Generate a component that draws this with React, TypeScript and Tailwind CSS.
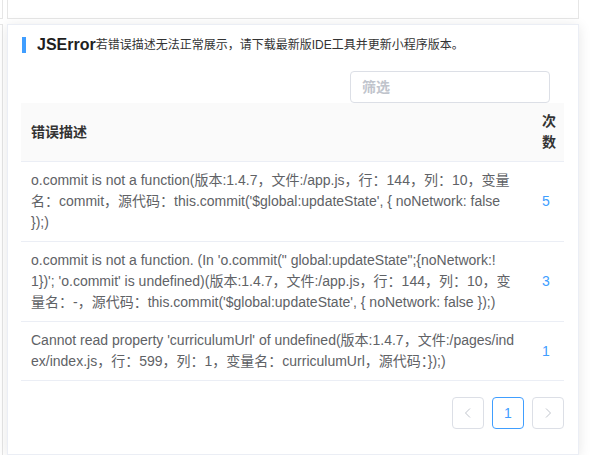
import React from 'react';

const rows = [
  {
    lines: [
      'o.commit is not a function(版本:1.4.7，文件:/app.js，行：144，列：10，变量',
      "名：commit，源代码：this.commit('$global:updateState', { noNetwork: false",
      '});)',
    ],
    count: 5,
  },
  {
    lines: [
      "o.commit is not a function. (In 'o.commit(\" global:updateState\";{noNetwork:!",
      "1})'; 'o.commit' is undefined)(版本:1.4.7，文件:/app.js，行：144，列：10，变",
      "量名：-，源代码：this.commit('$global:updateState', { noNetwork: false });)",
    ],
    count: 3,
  },
  {
    lines: [
      "Cannot read property 'curriculumUrl' of undefined(版本:1.4.7，文件:/pages/ind",
      'ex/index.js，行：599，列：1，变量名：curriculumUrl，源代码：});)',
    ],
    count: 1,
  },
];

const ChevronLeft = () => (
  <svg width="10" height="12" viewBox="0 0 10 12" fill="none">
    <path d="M7 1.5L2.5 6L7 10.5" stroke="#c0c4cc" strokeWidth="1" />
  </svg>
);

const ChevronRight = () => (
  <svg width="10" height="12" viewBox="0 0 10 12" fill="none">
    <path d="M3 1.5L7.5 6L3 10.5" stroke="#c0c4cc" strokeWidth="1" />
  </svg>
);

export default function App() {
  return (
    <div
      className="flex h-[455px] w-[593px] overflow-hidden bg-white"
      style={{ fontFamily: '"Liberation Sans", "Noto Sans CJK SC", sans-serif' }}
    >
      {/* edge of the left column */}
      <div className="flex w-[3px] flex-col gap-[5px]">
        <div className="h-[19px] border-b border-r border-[#e6e6e6]" />
        <div className="flex-1 border-r border-t border-[#e6e6e6]" />
      </div>

      <div className="ml-[4px] flex w-[572px] flex-col gap-[5px]">
        <div className="h-[19px] border-x border-b border-[#e6e6e6] bg-white" />

        <div className="flex-1 border border-[#ebeef5] bg-white px-[13px] pt-[12px] shadow-[0_2px_12px_0_rgba(0,0,0,0.1)]">
          {/* title */}
          <div className="flex h-[16px] items-center">
            <div className="ml-[1px] h-[16px] w-[4px] bg-[#409eff]" />
            <span className="ml-[11px] text-[16px] font-bold leading-[16px] text-[#1f1f1f]">JSError</span>
            <span className="text-[12px] leading-[16px] text-[#333]">
              若错误描述无法正常展示，请下载最新版IDE工具并更新小程序版本。
            </span>
          </div>

          {/* filter */}
          <div className="mt-[18px] flex justify-end pr-[15px]">
            <div className="flex h-[32px] w-[200px] items-center rounded-[4px] border border-[#dcdfe6] px-[11px]">
              <span className="text-[14px] font-bold text-[#c0c4cc]">筛选</span>
            </div>
          </div>

          {/* table */}
          <div className="w-[543px] text-[14px] leading-[21px]">
            <div className="flex border-b border-[#ebeef5] bg-[#fafafa]">
              <div className="flex flex-1 items-center px-[10px] py-[8px] font-bold text-[#333]">错误描述</div>
              <div className="w-[32px] py-[8px] pl-[10px] font-bold text-[#333]">
                <div className="w-[14px]">次 数</div>
              </div>
            </div>
            {rows.map((r, i) => (
              <div key={i} className="flex border-b border-[#ebeef5]">
                <div className="flex-1 px-[10px] py-[8px] text-[#606266]">
                  {r.lines.map((l, j) => (
                    <div key={j} className="whitespace-nowrap">
                      {l}
                    </div>
                  ))}
                </div>
                <div className="flex w-[32px] items-center pl-[10px] text-[#409eff]">{r.count}</div>
              </div>
            ))}
          </div>

          {/* pagination */}
          <div className="mt-[16px] flex w-[543px] justify-end gap-[8px]">
            <button className="flex h-[32px] w-[32px] items-center justify-center rounded-[4px] border border-[#dcdfe6] bg-white">
              <ChevronLeft />
            </button>
            <button className="flex h-[32px] w-[32px] items-center justify-center rounded-[4px] border border-[#409eff] bg-white text-[14px] text-[#409eff]">
              1
            </button>
            <button className="flex h-[32px] w-[32px] items-center justify-center rounded-[4px] border border-[#dcdfe6] bg-white">
              <ChevronRight />
            </button>
          </div>
        </div>
      </div>
    </div>
  );
}
